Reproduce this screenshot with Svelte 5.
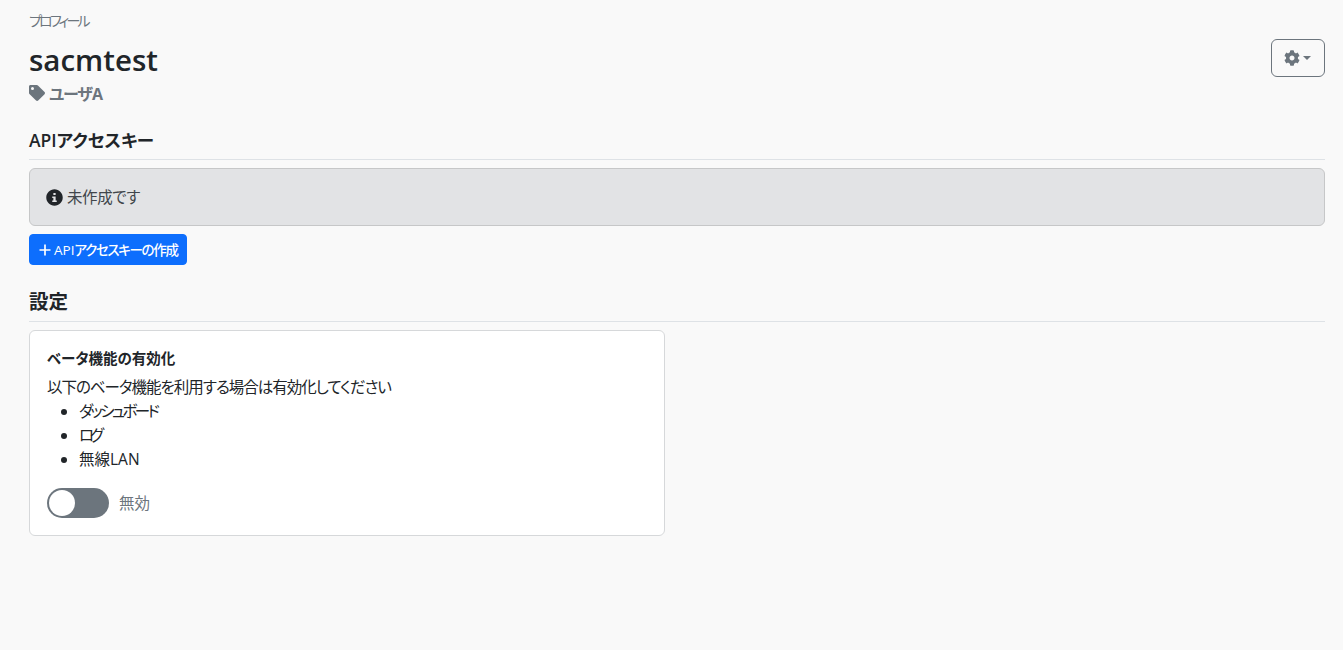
<script>
  let betaEnabled = $state(false);
  const betaFeatures = ['ダッシュボード', 'ログ', '無線LAN'];
</script>

<main class="page">
  <div class="crumb">プロフィール</div>

  <header class="head">
    <div>
      <h1>sacmtest</h1>
      <div class="role">
        <svg class="tag" viewBox="0 0 512 512" aria-hidden="true">
          <path fill="currentColor" d="M0 252.100V48C0 21.500 21.500 0 48 0h204.100a48 48 0 0 1 33.900 14.100l211.900 211.900c18.700 18.700 18.700 49.100 0 67.900L293.800 497.900c-18.700 18.700-49.100 18.700-67.900 0L14.100 286.100A48 48 0 0 1 0 252.100zM112 64a48 48 0 1 0 0 96 48 48 0 1 0 0-96z" />
        </svg>
        <span>ユーザA</span>
      </div>
    </div>
    <button class="gear-btn" aria-label="設定メニュー">
      <svg class="gear" viewBox="0 0 512 512" aria-hidden="true">
        <path fill="currentColor" d="M487.400 315.700l-42.600-24.600c4.300-23.200 4.300-47 0-70.200l42.600-24.600c4.900-2.800 7.100-8.600 5.500-14-11.100-35.600-30-67.800-54.700-94.600-3.800-4.100-10-5.100-14.800-2.300L380.800 110c-17.900-15.400-38.500-27.300-60.800-35.100V25.800c0-5.600-3.900-10.500-9.400-11.700-36.700-8.200-74.300-7.800-109.200 0-5.500 1.200-9.400 6.100-9.400 11.700V75c-22.200 7.900-42.800 19.800-60.800 35.100L88.700 85.500c-4.900-2.800-11-1.900-14.800 2.300-24.700 26.700-43.600 58.900-54.700 94.600-1.700 5.400.6 11.200 5.500 14L67.300 221c-4.300 23.200-4.300 47 0 70.200l-42.600 24.600c-4.900 2.800-7.100 8.600-5.500 14 11.100 35.600 30 67.800 54.700 94.600 3.800 4.100 10 5.100 14.800 2.300l42.600-24.600c17.900 15.400 38.500 27.300 60.800 35.100v49.200c0 5.600 3.900 10.500 9.400 11.700 36.700 8.200 74.300 7.800 109.200 0 5.500-1.200 9.400-6.100 9.400-11.700v-49.200c22.200-7.900 42.800-19.800 60.800-35.100l42.600 24.600c4.900 2.800 11 1.900 14.800-2.300 24.700-26.700 43.600-58.900 54.700-94.600 1.500-5.500-.7-11.300-5.600-14.100zM256 336c-44.100 0-80-35.900-80-80s35.900-80 80-80 80 35.900 80 80-35.900 80-80 80z" />
      </svg>
      <span class="caret"></span>
    </button>
  </header>

  <section class="api-section">
    <h2>APIアクセスキー</h2>
    <div class="alert">
      <svg class="info" viewBox="0 0 512 512" aria-hidden="true">
        <path fill="currentColor" d="M256 8C119 8 8 119 8 256s111 248 248 248 248-111 248-248S393 8 256 8zm-34 112h68v64h-68zm-34 104h102v120h34v48H188v-48h34v-72h-34z" />
      </svg>
      <span>未作成です</span>
    </div>
    <button class="create-btn">
      <svg class="plus" viewBox="0 0 12 12" aria-hidden="true">
        <path d="M6 .5v11M.5 6h11" stroke="currentColor" stroke-width="1.700" fill="none" />
      </svg>
      <span><span class="latin">API</span>アクセスキーの作成</span>
    </button>
  </section>

  <section class="settings-section">
    <h2>設定</h2>
    <div class="card">
      <h3>ベータ機能の有効化</h3>
      <p>以下のベータ機能を利用する場合は有効化してください</p>
      <ul>
        {#each betaFeatures as feature}
          <li>{feature}</li>
        {/each}
      </ul>
      <label class="switch-row">
        <input type="checkbox" bind:checked={betaEnabled} />
        <span class="switch"></span>
        <span class="switch-text">{betaEnabled ? '有効' : '無効'}</span>
      </label>
    </div>
  </section>
</main>

<style>
  :global(body) {
    background: #f9f9f9;
    color: #212529;
    font-family: "Open Sans", "Noto Sans CJK JP", sans-serif;
    font-feature-settings: "palt";
  }

  .page {
    padding: 11px 18px 0 29px;
  }

  .crumb {
    font-size: 14px;
    line-height: 20px;
    letter-spacing: -2.800px;
    color: #6c757d;
  }

  .head {
    display: flex;
    justify-content: space-between;
    align-items: flex-start;
  }

  h1 {
    margin: 8px 0 0;
    font-size: 29.500px;
    line-height: 42px;
    font-weight: 600;
  }

  .role {
    display: flex;
    align-items: center;
    gap: 4px;
    height: 24px;
    font-size: 16px;
    font-weight: 700;
    letter-spacing: -1.200px;
    color: #6c757d;
  }

  .tag {
    width: 16px;
    height: 16px;
  }

  .gear-btn {
    display: flex;
    align-items: center;
    justify-content: center;
    gap: 3px;
    width: 54px;
    height: 38px;
    margin-top: 8px;
    padding: 0 2px 0 0;
    background: transparent;
    border: 1px solid #6c757d;
    border-radius: 6px;
    color: #6c757d;
  }

  .gear {
    width: 16px;
    height: 16px;
  }

  .caret {
    border-top: 4px solid #6c757d;
    border-left: 4px solid transparent;
    border-right: 4px solid transparent;
  }

  h2 {
    margin: 0;
    padding-bottom: 6px;
    border-bottom: 1px solid #dee2e6;
    font-size: 17.500px;
    line-height: 26px;
    font-weight: 600;
  }

  .settings-section h2 {
    font-size: 19.500px;
  }

  .api-section {
    margin-top: 22px;
  }

  .alert {
    display: flex;
    align-items: center;
    gap: 4px;
    height: 58px;
    box-sizing: border-box;
    margin-top: 8px;
    padding: 0 16px 2px;
    background: #e2e3e5;
    border: 1px solid #c6c7c8;
    border-radius: 6px;
    font-size: 15.500px;
    letter-spacing: -0.400px;
    color: #41464b;
  }

  .info {
    width: 17px;
    height: 17px;
    margin-top: 2px;
    color: #212529;
  }

  .create-btn {
    display: flex;
    align-items: center;
    gap: 3px;
    width: 158px;
    height: 31px;
    margin-top: 8px;
    padding: 0 0 2px 9px;
    background: #0d6efd;
    border: 1px solid #0d6efd;
    border-radius: 4px;
    color: #fff;
    font-family: inherit;
    font-feature-settings: inherit;
    font-size: 13.500px;
    font-weight: 500;
    letter-spacing: -1.300px;
    white-space: nowrap;
  }

  .latin {
    letter-spacing: 0;
  }

  .plus {
    width: 12px;
    height: 12px;
    margin-top: 2px;
  }

  .settings-section {
    margin-top: 24px;
  }

  .card {
    width: 636px;
    box-sizing: border-box;
    margin-top: 8px;
    padding: 16px 17px 17px;
    background: #fff;
    border: 1px solid #d6d8da;
    border-radius: 6px;
    font-size: 15.500px;
  }

  h3 {
    margin: 0;
    font-size: 14.500px;
    line-height: 24px;
    font-weight: 700;
  }

  p {
    margin: 4px 0 0;
    line-height: 24px;
    letter-spacing: -1px;
  }

  ul {
    margin: 0 0 16px;
    padding-left: 32px;
  }

  li {
    line-height: 24.500px;
    margin-top: -0.300px;
  }

  li:nth-child(1) {
    letter-spacing: -2.600px;
  }

  li:nth-child(2) {
    letter-spacing: -4px;
  }

  .switch-row {
    display: flex;
    align-items: center;
    gap: 10px;
    color: #6c757d;
  }

  input {
    display: none;
  }

  .switch {
    position: relative;
    width: 62px;
    height: 30px;
    background: #6c757d;
    border-radius: 16px;
  }

  .switch::after {
    content: "";
    position: absolute;
    left: 2px;
    top: 2px;
    width: 26px;
    height: 26px;
    background: #fff;
    border-radius: 50%;
  }

  input:checked + .switch {
    background: #0d6efd;
  }

  input:checked + .switch::after {
    left: 34px;
  }
</style>
